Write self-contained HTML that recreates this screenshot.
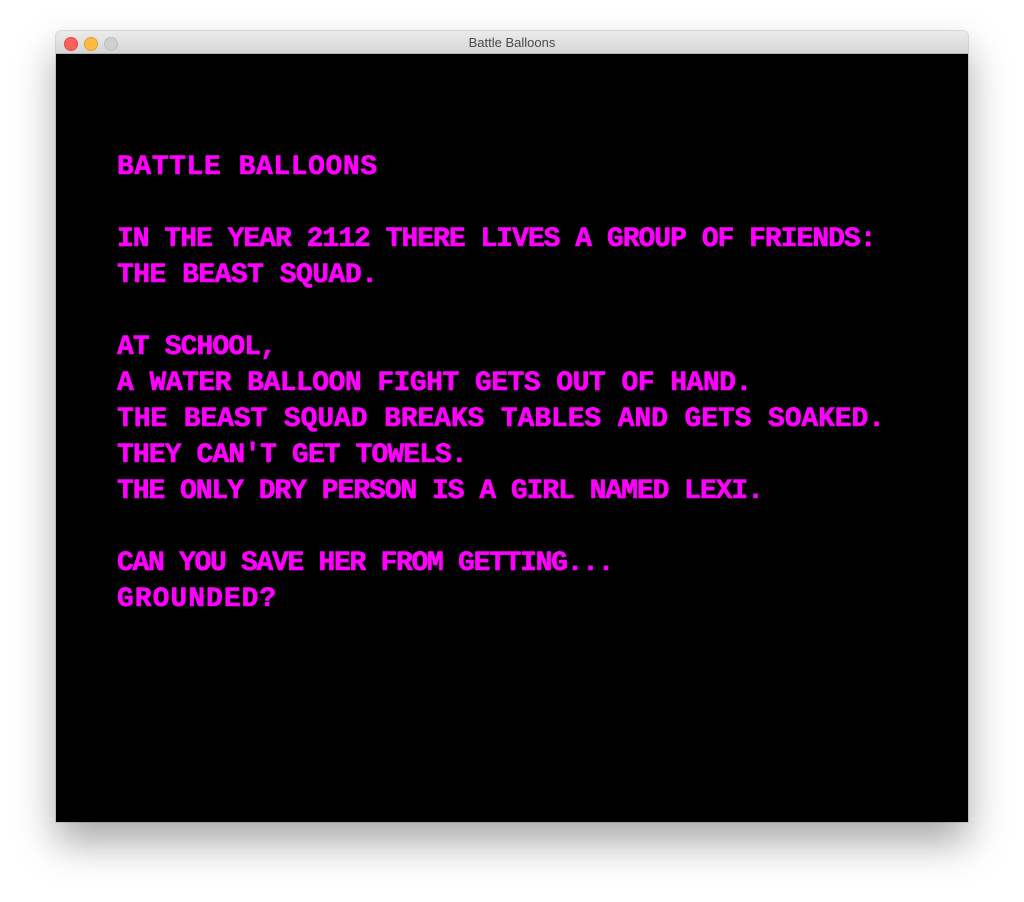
<!DOCTYPE html>
<html><head><style>
body{margin:0;width:1024px;height:902px;background:#fff;position:relative;overflow:hidden;font-family:"Liberation Sans",sans-serif}
.win{position:absolute;left:56px;top:31px;width:912px;height:791px;box-shadow:0 20px 40px rgba(0,0,0,.35),0 0 0 1px rgba(0,0,0,.12);border-radius:5px 5px 0 0;overflow:hidden}
.tb{height:22px;background:linear-gradient(#ebebeb,#d6d6d6);border-bottom:1px solid #b5b5b5;text-align:center;font-size:13px;line-height:23px;color:#4a4a4a}
.d{position:absolute;top:6px;width:12px;height:12px;border-radius:50%}
.c{position:absolute;top:23px;left:0;right:0;bottom:0;background:#000}
.t{position:absolute;left:61px;top:96px;font:bold 28px/36px "Liberation Mono",monospace;color:#ff00ff;-webkit-text-stroke:0.6px #ff00ff}
.t div{height:36px;white-space:pre}
</style></head><body>
<div class="win">
<div class="tb">Battle Balloons</div>
<div class="d" style="left:8px;background:#fc605c;border:0.5px solid #de4a45"></div>
<div class="d" style="left:28px;background:#fdbc40;border:0.5px solid #dea235"></div>
<div class="d" style="left:48px;background:#cfcfcf;border:0.5px solid #bdbdbd"></div>
<div class="c">
<div class="t">
<div style="letter-spacing:0.57px">BATTLE BALLOONS</div>
<div></div>
<div style="letter-spacing:-1px">IN THE YEAR 2112 THERE LIVES A GROUP OF FRIENDS:</div>
<div style="letter-spacing:-0.53px">THE BEAST SQUAD.</div>
<div></div>
<div style="letter-spacing:-0.9px">AT SCHOOL,</div>
<div style="letter-spacing:-0.53px">A WATER BALLOON FIGHT GETS OUT OF HAND.</div>
<div style="letter-spacing:-0.11px">THE BEAST SQUAD BREAKS TABLES AND GETS SOAKED.</div>
<div style="letter-spacing:-0.9px">THEY CAN'T GET TOWELS.</div>
<div style="letter-spacing:-1.05px">THE ONLY DRY PERSON IS A GIRL NAMED LEXI.</div>
<div></div>
<div style="letter-spacing:-1.3px">CAN YOU SAVE HER FROM GETTING...</div>
<div style="letter-spacing:1px">GROUNDED?</div>
</div>
</div>
</div>
</body></html>
